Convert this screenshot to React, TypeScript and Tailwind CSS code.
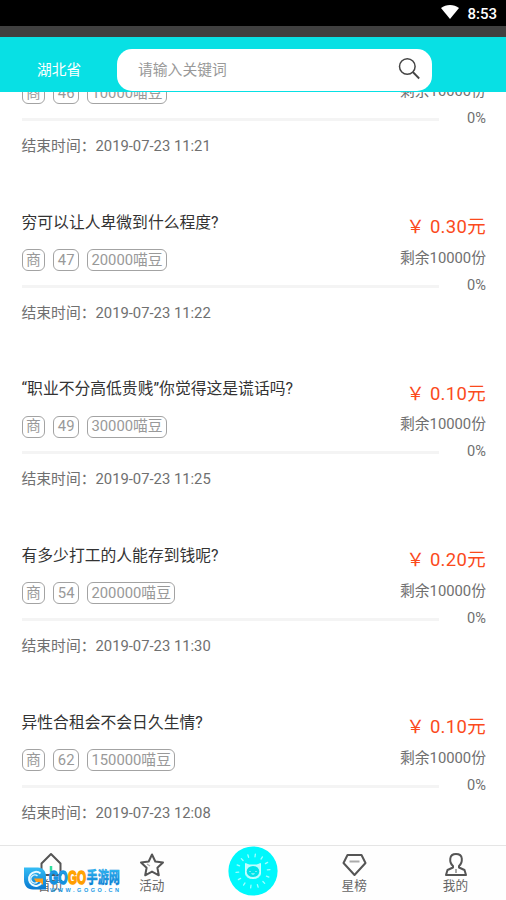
import type { ReactNode } from "react";

type Task = {
  id: number;
  title: string;
  beans: number;
  price: string;
  end: string;
};

const tasks: Task[] = [
  { id: 46, title: "", beans: 10000, price: "0.30", end: "2019-07-23 11:21" },
  { id: 47, title: "穷可以让人卑微到什么程度?", beans: 20000, price: "0.30", end: "2019-07-23 11:22" },
  { id: 49, title: "“职业不分高低贵贱”你觉得这是谎话吗?", beans: 30000, price: "0.10", end: "2019-07-23 11:25" },
  { id: 54, title: "有多少打工的人能存到钱呢?", beans: 200000, price: "0.20", end: "2019-07-23 11:30" },
  { id: 62, title: "异性合租会不会日久生情?", beans: 150000, price: "0.10", end: "2019-07-23 12:08" },
];

function Tag({ children }: { children: ReactNode }) {
  return (
    <span className="flex h-[22px] items-center rounded-[6px] border border-[#a3a3a3] px-[3.5px] text-[14.8px] leading-none text-[#999]">
      {children}
    </span>
  );
}

function TaskRow({ task }: { task: Task }) {
  return (
    <article className="h-[166.7px] shrink-0 pr-5 pl-[21.5px]">
      <div className="flex h-[82px] justify-between">
        <div className="pt-[10.5px]">
          <h2 className="h-6 text-[15.8px] leading-6 whitespace-nowrap text-[#333]">{task.title}</h2>
          <div className="mt-[14.5px] flex gap-2">
            <Tag>商</Tag>
            <Tag>{task.id}</Tag>
            <Tag>{task.beans}喵豆</Tag>
          </div>
        </div>
        <div className="pt-[15px] text-right whitespace-nowrap">
          <p className="h-6 text-[18.5px] leading-6 tracking-[0.3px] text-[#fb4a1c]">￥ {task.price}元</p>
          <p className="mt-[8.5px] text-[14.8px] leading-5 text-[#707070]">剩余10000份</p>
        </div>
      </div>
      <div className="flex h-2 items-center justify-between">
        <div className="h-[3px] w-[417px] bg-[#f4f4f4]" />
        <span className="-mt-0.5 text-[14.6px] leading-none text-[#707070]">0%</span>
      </div>
      <p className="mt-[12.5px] text-[14.8px] leading-5 text-[#707070]">结束时间：{task.end}</p>
    </article>
  );
}

function NavItem({ label, children }: { label: string; children: ReactNode }) {
  return (
    <a className="flex flex-col items-center pt-1.5 text-[12.6px] leading-[18px] text-[#666]">
      <svg viewBox="0 0 26 26" className="h-[26px] w-[26px]" fill="none" stroke="#555" strokeWidth="2" strokeLinejoin="round">
        {children}
      </svg>
      <span className="-mt-px">{label}</span>
    </a>
  );
}

// sun disc with the cat in the middle
function CatButton() {
  const rays = Array.from({ length: 14 }, (_, i) => (i * 360) / 14 + 8);
  return (
    <svg viewBox="0 0 50 50" className="h-[50px] w-[50px]">
      <circle cx="25" cy="25" r="24.6" fill="#00f8fc" />
      {rays.map((deg) => (
        <path key={deg} d="M25 8v2.6" stroke="#9ffdff" strokeWidth="1.3" strokeLinecap="round" transform={`rotate(${deg} 25 25)`} />
      ))}
      <path d="M17.5 17.5l3.5 1.5h8l3.5-1.5v9.500c0 3.500-3 5.500-7.500 5.500s-7.500-2-7.500-5.500z" fill="#b8feff" stroke="#c8feff" strokeWidth="1" strokeLinejoin="round" />
      <ellipse cx="25" cy="25.5" rx="6.3" ry="5.5" fill="#00e4ea" />
      <path d="M21.5 25.5h1M27.5 25.5h1M23.5 27.7q1.5.8 3 0" stroke="#d8ffff" strokeWidth="1" fill="none" />
    </svg>
  );
}

function Watermark() {
  return (
    <svg viewBox="0 0 98 28" className="absolute top-[20px] left-[23px] h-[28px] w-[98px]" fontFamily="'Liberation Sans', 'Noto Sans CJK SC', sans-serif" fontWeight="900">
      <defs>
        <linearGradient id="blue" x1="0" y1="0" x2="0" y2="1">
          <stop offset="0" stopColor="#35bdf5" />
          <stop offset="1" stopColor="#0878cf" />
        </linearGradient>
        <linearGradient id="orange" x1="0" y1="0" x2="0" y2="1">
          <stop offset="0" stopColor="#ffc400" />
          <stop offset="1" stopColor="#ff8500" />
        </linearGradient>
      </defs>
      <path d="M1 1.5h14c5 0 8 4 8 9v13H10C4 23.5 1 19.5 1 13.5z" fill="url(#blue)" />
      <path d="M17.5 7.5a7 7 0 1 0 1.500 9" fill="none" stroke="#e8f8ff" strokeWidth="2" />
      <path d="M14.5 10a4 4 0 1 0 0 6" fill="none" stroke="#d7f3ff" strokeWidth="1.5" />
      <path d="M11 12.5h9v6.5l-3-3h-4z" fill="#ff9d1c" />
      <text x="26" y="17.500" fontSize="18.5" textLength="18.5" lengthAdjust="spacingAndGlyphs" fill="url(#blue)" stroke="#1593e0" strokeWidth="1.6">GO</text>
      <text x="45" y="17.500" fontSize="18.5" textLength="18" lengthAdjust="spacingAndGlyphs" fill="url(#orange)" stroke="#ffa000" strokeWidth="1.6">GO</text>
      <text x="63.5" y="17" fontSize="15.5" textLength="33.5" lengthAdjust="spacingAndGlyphs" fill="url(#blue)" stroke="#1593e0" strokeWidth="0.3">手游网</text>
      <text x="27" y="25.500" fontSize="5.5" textLength="69" fill="#1a9ae6">WWW.GOGO.CN</text>
    </svg>
  );
}

export default function App() {
  return (
    <div className="flex h-[900px] w-[506px] flex-col overflow-hidden bg-white font-['Roboto','Noto_Sans_CJK_SC',sans-serif]">
      <div className="flex h-[26px] shrink-0 items-center justify-end gap-2 bg-black pr-[9px] text-white">
        <svg viewBox="0 0 18 14" className="-mt-0.5 h-[14px] w-[18px]">
          <path d="M0 3C5-1 13-1 18 3L9 14z" fill="#fff" />
        </svg>
        <span className="pt-0.5 text-[15px] leading-none font-medium">8:53</span>
      </div>
      <div className="h-[11px] shrink-0 bg-[#404040]" />

      <header className="flex h-[55px] shrink-0 items-center bg-[#08e0e4] pt-[11px] pl-[37px]">
        <span className="w-20 pt-px text-[14.7px] leading-none text-white">湖北省</span>
        <div className="flex h-[42px] w-[315px] items-center justify-between rounded-[15px] bg-white pr-[11px] pl-[21px]">
          <span className="text-[14.8px] leading-none text-[#999]">请输入关键词</span>
          <svg viewBox="0 0 24 24" className="-mt-1 h-6 w-6" fill="none" stroke="#444" strokeWidth="1.5">
            <circle cx="10.3" cy="10.5" r="7.8" />
            <path d="M15.8 16l6.4 6.5" strokeWidth="1.8" />
          </svg>
        </div>
      </header>

      <main className="h-[753px] shrink-0 overflow-hidden">
        <div className="-mt-[58.7px] flex flex-col">
          {tasks.map((task) => (
            <TaskRow key={task.id} task={task} />
          ))}
        </div>
      </main>

      <nav className="relative grid h-[55px] shrink-0 grid-cols-5 border-t border-[#e5e5e5] bg-[#fefefe]">
        <NavItem label="首页">
          <path d="M3.5 11.5L13 2l9.500 9.500V23h-19z" />
          <path d="M13 14v6" stroke="#2fe0a0" strokeWidth="2.5" />
        </NavItem>
        <NavItem label="活动">
          <path d="M13 2.5l3.300 7 7.700 1-5.600 5.300 1.400 7.500-6.800-3.700-6.800 3.700 1.400-7.500L2 10.500l7.700-1z" />
          <path d="M8 12l3 2" stroke="#aaa" strokeWidth="1.2" />
        </NavItem>
        <div className="flex justify-center">
          <CatButton />
        </div>
        <NavItem label="星榜">
          <path d="M6.500 3h14l4 8L13.500 23 2.500 11z" />
          <path d="M8.500 9.500h10" stroke="#aaa" />
        </NavItem>
        <NavItem label="我的">
          <path d="M11 14C8.500 12 8 9 8.300 6.500 8.700 3.500 11 2 14 2s5.500 1.500 5.800 4.500c.2 2.500-.3 5.500-2.800 7.500v1.500l5.500 2.500 1.500 5H4L5.500 18l5.500-2.500z" />
          <path d="M14 17v4" stroke="#aaa" />
        </NavItem>
        <Watermark />
      </nav>
    </div>
  );
}
